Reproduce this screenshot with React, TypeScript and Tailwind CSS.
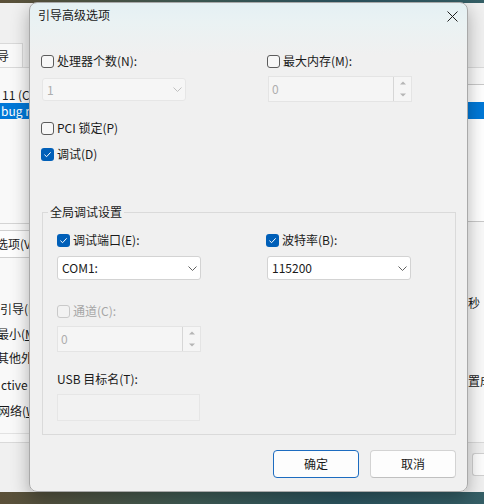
import React from 'react';

type BoxProps = { checked?: boolean; disabled?: boolean };

function CheckBox({ checked, disabled }: BoxProps) {
  if (checked) {
    return (
      <span className="flex h-[13px] w-[13px] shrink-0 items-center justify-center rounded-[3px] bg-[#005fb8]">
        <svg width="9" height="9" viewBox="0 0 9 9" fill="none">
          <path d="M1.7 4.9 3.6 6.7 7.4 2.6" stroke="#fff" strokeWidth="1" strokeLinecap="round" strokeLinejoin="round" />
        </svg>
      </span>
    );
  }
  return (
    <span
      className={`h-[13px] w-[13px] shrink-0 rounded-[3px] border ${
        disabled ? 'border-[#c9c9c9] bg-[#f2f2f2]' : 'border-[#5c5c5c] bg-[#f7f7f7]'
      }`}
    />
  );
}

function CheckRow({ label, checked, disabled }: BoxProps & { label: string }) {
  return (
    <div className={`flex h-4 items-center gap-[3px] ${disabled ? 'text-[#a6a6a6]' : 'text-[#1a1a1a]'}`}>
      <CheckBox checked={checked} disabled={disabled} />
      <span className="leading-4">{label}</span>
    </div>
  );
}

function Chevron({ color }: { color: string }) {
  return (
    <svg width="9" height="5" viewBox="0 0 9 5" fill="none">
      <path d="M0.5 0.5 4.5 4.5 8.5 0.5" stroke={color} strokeWidth="1" />
    </svg>
  );
}

function Combo({ value, disabled, className = '' }: { value: string; disabled?: boolean; className?: string }) {
  return (
    <div
      className={`flex w-[144px] items-center justify-between rounded-[3px] border pl-[4px] pr-[3px] ${
        disabled ? 'border-[#e6e6e6] bg-[#f6f6f6] text-[#adadad]' : 'border-[#d3d3d3] bg-white text-[#1a1a1a]'
      } ${className}`}
    >
      <span className="leading-4">{value}</span>
      <Chevron color={disabled ? '#c0c0c0' : '#606060'} />
    </div>
  );
}

function Spinner({ value, className = '' }: { value: string; className?: string }) {
  return (
    <div className={`flex h-[26px] w-[144px] border border-[#e4e4e4] bg-[#f5f5f5] ${className}`}>
      <span className="flex-1 pl-[3px] leading-[24px] text-[#adadad]">{value}</span>
      <div className="flex w-[18px] flex-col border-l border-[#d6d6d6]">
        <div className="flex flex-1 items-center justify-center">
          <svg width="6" height="4" viewBox="0 0 6 4">
            <path d="M0 3.5 3 0.5 6 3.5Z" fill="#b5b5b5" />
          </svg>
        </div>
        <div className="flex flex-1 items-center justify-center">
          <svg width="6" height="4" viewBox="0 0 6 4">
            <path d="M0 0.5 3 3.5 6 0.5Z" fill="#b5b5b5" />
          </svg>
        </div>
      </div>
    </div>
  );
}

function LeftStrip() {
  return (
    <div className="flex w-[29px] shrink-0 flex-col overflow-hidden whitespace-nowrap text-[#1a1a1a]">
      <div className="h-[40px] shrink-0" />
      <div className="flex h-[24px] shrink-0">
        <div className="flex w-[23px] items-center overflow-hidden border-r border-t border-[#d9d9d9] bg-[#f9f9f9]">
          <span className="-ml-[15px]">引导</span>
        </div>
      </div>
      <div className="flex h-[376px] shrink-0 flex-col border-y border-[#d9d9d9] bg-[#f9f9f9]">
        <div className="mt-[19px] h-4 pl-[2px] leading-4">11 (C:\WINDOWS)</div>
        <div className="h-[16px] bg-[#0078d7] pl-[1px] leading-4 text-white">bug mode</div>
        <div className="mt-[104px] border-t border-[#d4d4d4]" />
        <div className="mt-[6px] flex h-[28px] items-center border-y border-[#d0d0d0] bg-[#fdfdfd]">
          <span className="-ml-[4px]">选项(V)...</span>
        </div>
        <div className="mt-[43px] h-4 leading-4">引导(F)</div>
        <div className="mt-[9px] h-4 -ml-[3px] leading-4">
          最小(<span className="underline">M</span>)
        </div>
        <div className="mt-[8px] h-4 -ml-[3px] leading-4">其他外壳(L)</div>
        <div className="mt-[11px] h-4 pl-[1px] leading-4">ctive Directory</div>
        <div className="mt-[10px] h-4 -ml-[2px] leading-4">
          网络(<span className="underline">W</span>)
        </div>
        <div className="mt-[14px] border-t border-[#e2e2e2]" />
      </div>
    </div>
  );
}

function RightStrip() {
  return (
    <div className="flex w-[16px] shrink-0 flex-col overflow-hidden whitespace-nowrap text-[#1a1a1a]">
      <div className="h-[64px] shrink-0" />
      <div className="flex h-[376px] shrink-0 flex-col border-y border-[#d9d9d9] bg-[#f9f9f9]">
        <div className="mt-[16px] h-[138px] border-y border-[#c9c9c9] bg-white">
          <div className="mt-[17px] h-[17px] bg-[#0078d7]" />
        </div>
        <div className="mt-[73px] h-4 leading-4">秒</div>
        <div className="mt-[62px] h-4 leading-4">置成为</div>
      </div>
      <div className="ml-[4px] mt-[10px] h-[23px] rounded-l-[3px] border border-r-0 border-[#d0d0d0] bg-[#fdfdfd]" />
    </div>
  );
}

function Dialog() {
  return (
    <div className="absolute left-[29px] top-[2px] flex h-[490px] w-[439px] flex-col overflow-hidden rounded-[8px] border border-[#a9a9a9] bg-[linear-gradient(180deg,#e4f0f3_0px,#eaf2f3_20px,#f0f0f0_52px)] text-[#1a1a1a] shadow-[0_6px_18px_rgba(0,0,0,0.3)]">
      {/* title bar */}
      <div className="flex h-[24px] items-center justify-between pl-[8px] pr-[9px]">
        <span className="leading-4">引导高级选项</span>
        <svg width="11" height="11" viewBox="0 0 11 11" className="mt-[2px]">
          <path d="M0.5 0.5 10.5 10.5 M10.5 0.5 0.5 10.5" stroke="#1f1f1f" strokeWidth="1" />
        </svg>
      </div>

      <div className="flex flex-col pl-[11px]">
        <div className="mt-[26px] grid grid-cols-[226px_1fr]">
          <CheckRow label="处理器个数(N):" />
          <CheckRow label="最大内存(M):" />
        </div>
        <div className="mt-[7px] grid h-[26px] grid-cols-[226px_1fr]">
          <Combo value="1" disabled className="ml-[1px] mt-[2px] h-[23px]" />
          <Spinner value="0" className="ml-[1px]" />
        </div>
        <div className="mt-[18px]">
          <CheckRow label="PCI 锁定(P)" />
        </div>
        <div className="mt-[10px]">
          <CheckRow label="调试(D)" checked />
        </div>

        {/* group box */}
        <div className="ml-[1px] mt-[50px] flex h-[223px] w-[414px] flex-col border border-[#dadada]">
          <span className="-mt-[9px] ml-[5px] w-fit bg-[#f0f0f0] px-[2px] leading-4">全局调试设置</span>
          <div className="flex flex-col pl-[14px]">
            <div className="mt-[12px] grid grid-cols-[209px_1fr]">
              <CheckRow label="调试端口(E):" checked />
              <CheckRow label="波特率(B):" checked />
            </div>
            <div className="mt-[8px] grid grid-cols-[209px_1fr]">
              <Combo value="COM1:" className="h-[24px]" />
              <Combo value="115200" className="ml-[1px] h-[24px]" />
            </div>
            <div className="mt-[23px]">
              <CheckRow label="通道(C):" disabled />
            </div>
            <Spinner value="0" className="mt-[7px]" />
            <div className="mt-[19px] h-4 leading-4">USB 目标名(T):</div>
            <div className="mt-[7px] h-[27px] w-[143px] border border-[#e6e6e6] bg-[#f2f2f2]" />
          </div>
        </div>

        <div className="ml-[1px] mt-[15px] flex w-[414px] justify-end gap-[11px]">
          <button className="h-[28px] w-[86px] rounded-[4px] border border-[#1d6cc0] bg-[#fdfdfd] leading-4 text-[#1a1a1a]">
            确定
          </button>
          <button className="h-[28px] w-[86px] rounded-[4px] border border-[#d3d3d3] border-b-[#c0c0c0] bg-[#fdfdfd] leading-4 text-[#1a1a1a]">
            取消
          </button>
        </div>
      </div>
    </div>
  );
}

export default function App() {
  return (
    <div className="relative h-[504px] w-[484px] overflow-hidden bg-[linear-gradient(90deg,#5b5038_0%,#3f5c55_40%,#2c5560_70%,#355f66_100%)] font-['Noto_Sans_CJK_SC','Noto_Sans',sans-serif] text-[12px]">
      <div className="mt-[3px] flex h-[489px] bg-[#f0f0f0]">
        <LeftStrip />
        <div className="flex-1" />
        <RightStrip />
      </div>
      <Dialog />
    </div>
  );
}
